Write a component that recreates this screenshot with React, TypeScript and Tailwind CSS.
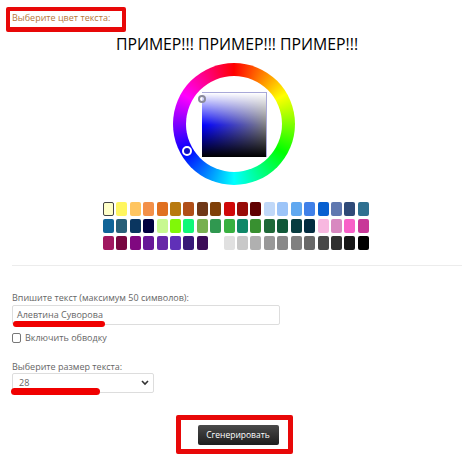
const swatches = [
  ["#ffffc8", "#fff65f", "#ffc560", "#f39048", "#e07020", "#b87a10", "#b04f18", "#703818", "#7f4008", "#d00808", "#980c08", "#600000", "#c0d8f8", "#9cc4f8", "#60a8f0", "#4080e8", "#0860d0", "#6078b0", "#2f4a78", "#2f7090"],
  ["#106498", "#285f78", "#0a3660", "#000040", "#c8f890", "#80f808", "#10f878", "#78b050", "#309850", "#38b040", "#108868", "#389030", "#1f6838", "#105838", "#083c40", "#032c40", "#f8b8e0", "#d888c0", "#f860c8", "#c83898"],
  ["#a01860", "#780840", "#800880", "#681898", "#6828a8", "#6030b8", "#381878", "#3c0c58", "#ffffff", "#e0e0e0", "#c8c8c8", "#b0b0b0", "#989898", "#888888", "#808080", "#686868", "#484848", "#303030", "#181818", "#000000"],
];

function ColorWheel() {
  return (
    <div className="relative ml-[161px] mt-[9px] flex h-[122px] w-[122px] items-center justify-center rounded-full bg-[conic-gradient(#ff0000,#ffff00,#00ff00,#00ffff,#0000ff,#ff00ff,#ff0000)]">
      <div className="flex h-[96px] w-[96px] items-center justify-center rounded-full bg-white">
        <div className="h-[65px] w-[65px] border-t border-r border-[#a8a8d8] bg-[linear-gradient(to_bottom,#ffffff,transparent_50%,transparent_50%,#000000),linear-gradient(to_right,#0000ff,#808080)]" />
      </div>
      <span className="absolute left-[25px] top-[32px] h-[8px] w-[8px] rounded-full border-2 border-[#8a8a9a] bg-white/20" />
      <span className="absolute left-[9px] top-[83px] h-[10px] w-[10px] rounded-full border-2 border-white bg-[#1010c0]" />
    </div>
  );
}

export default function App() {
  return (
    <div className="relative h-[461px] w-[474px] overflow-hidden bg-white font-['Open_Sans',sans-serif] text-[9px] text-[#666666]">
      <div className="px-[12px] pt-[12px]">
        <p className="h-[12px] leading-[12px] text-[#b5763a]">Выберите цвет текста:</p>
        <h1 className="mt-[10px] h-[20px] text-center text-[15.8px] leading-[20px] text-black">
          ПРИМЕР!!! ПРИМЕР!!! ПРИМЕР!!!
        </h1>

        <ColorWheel />

        <div className="ml-[91px] mt-[17px] flex w-[266px] flex-col gap-[3px]">
          {swatches.map((row, i) => (
            <div key={i} className="flex justify-between">
              {row.map((color, j) => (
                <span
                  key={j}
                  className={
                    i === 0 && j === 0
                      ? "h-[14px] w-[11px] rounded-[2px] border border-[#444444]"
                      : "h-[14px] w-[11px] rounded-[2px]"
                  }
                  style={{ backgroundColor: color }}
                />
              ))}
            </div>
          ))}
        </div>

        <div className="mt-[15px] h-px w-[450px] bg-[#ececec]" />

        <label className="mt-[26px] block h-[12px] leading-[12px]">Впишите текст (максимум 50 символов):</label>
        <div className="mt-[1px] flex h-[20px] w-[268px] items-center rounded-[2px] border border-[#dddddd] px-[4px]">
          Алевтина Суворова
        </div>
        <div className="mt-[7px] flex h-[11px] items-center gap-[4px]">
          <span className="h-[10px] w-[9px] rounded-[2px] border border-[#777777]" />
          <span>Включить обводку</span>
        </div>

        <label className="mt-[18px] block h-[12px] leading-[12px]">Выберите размер текста:</label>
        <div className="flex h-[20px] w-[142px] items-center justify-between rounded-[2px] border border-[#dddddd] pl-[6px] pr-[4px]">
          <span>28</span>
          <svg width="8" height="6" viewBox="0 0 8 6" fill="none" stroke="#333333" strokeWidth="1.6">
            <path d="M1 1l3 3 3-3" />
          </svg>
        </div>

        <div className="mt-[32px] flex justify-center">
          <button className="ml-[2px] h-[20px] w-[81px] rounded-[2px] bg-[linear-gradient(to_bottom,#4a4a4a,#1e1e1e)] text-[8.5px] text-white">
            Сгенерировать
          </button>
        </div>
      </div>

      {/* red marks drawn over the screenshot */}
      <div className="absolute left-[6px] top-[7px] h-[25px] w-[120px] rounded-[2px] border-[4px] border-b-[5px] border-[#e80808]" />
      <div className="absolute left-[13px] top-[321px] h-[6px] w-[92px] rounded-full bg-[#f00000]" />
      <div className="absolute left-[11px] top-[388px] h-[7px] w-[89px] rounded-full bg-[#f00000]" />
      <div className="absolute left-[176px] top-[415px] h-[39px] w-[117px] rounded-[2px] border-[5px] border-[#e80808]" />
    </div>
  );
}
